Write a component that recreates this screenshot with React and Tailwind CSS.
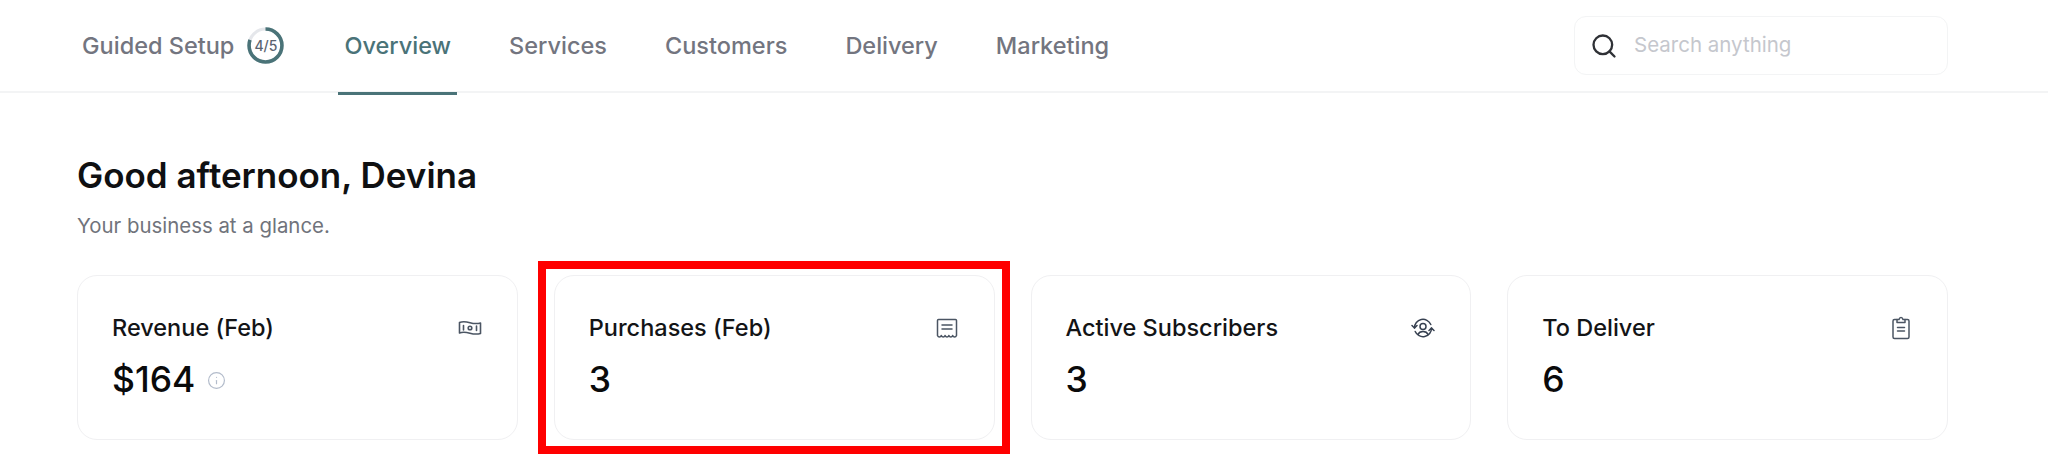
import React from "react";
import { Search, Info } from "lucide-react";

const BanknoteIcon = () => (
  <svg width="24" height="24" viewBox="0 0 24 24" fill="none" stroke="#4b5563" strokeWidth="1.6" strokeLinecap="round" strokeLinejoin="round">
    <path d="M1.500 6.500c3.500-1.400 6.500-.9 10.500.2s6.800 1.300 10.500.3v10.500c-3.700 1-6.500.8-10.500-.3s-7-1.600-10.500-.2z" />
    <circle cx="12" cy="12" r="1.800" />
    <path d="M5.500 9.500v4.500M18.500 10v4.500" />
  </svg>
);

const ReceiptIcon = () => (
  <svg width="24" height="24" viewBox="0 0 24 24" fill="none" stroke="#4b5563" strokeWidth="1.500" strokeLinecap="round" strokeLinejoin="round">
    <path d="M2.500 19.500V4.500a1 1 0 0 1 1-1h17a1 1 0 0 1 1 1v15c-.8 2-3 2-3.800 0-.8 2-3 2-3.800 0-.8 2-3 2-3.800 0-.8 2-3 2-3.800 0-.8 2-3 2-3.800 0z" />
    <path d="M7 9h10M7 13h10" />
  </svg>
);

const SubscriberIcon = () => (
  <svg width="24" height="24" viewBox="0 0 24 24" fill="none" stroke="#374151" strokeWidth="1.500" strokeLinecap="round" strokeLinejoin="round">
    <path d="M3.500 12A8.500 8.500 0 0 1 19.800 8.500" />
    <path d="M20.500 12A8.500 8.500 0 0 1 4.200 15.500" />
    <path d="M1 9.500 3.500 12 6 9.500" />
    <path d="M18 14.500 20.500 12 23 14.500" />
    <circle cx="12" cy="10.500" r="3" />
    <path d="M7 18.500c.8-2 2.700-3 5-3s4.200 1 5 3" />
  </svg>
);

const ClipboardIcon = () => (
  <svg width="24" height="24" viewBox="-1 0 24 24" fill="none" stroke="#4b5563" strokeWidth="1.500" strokeLinecap="round" strokeLinejoin="round">
    <path d="M8 3.500H5.500a1.500 1.500 0 0 0-1.500 1.500v16a1.500 1.500 0 0 0 1.500 1.500h13a1.500 1.500 0 0 0 1.500-1.500V5a1.500 1.500 0 0 0-1.500-1.500H16" />
    <path d="M8 6.500V3.500h2c.3-1.300 1-2 2-2s1.700.7 2 2h2v3z" />
    <path d="M8.500 11.500h7M8.500 15h7" />
  </svg>
);

const Ring = () => (
  <div className="relative w-[37px] h-[37px] ml-[13px]">
    <svg width="37" height="37" viewBox="0 0 36 36" fill="none">
      <circle cx="18" cy="18" r="16" stroke="#e5e7eb" strokeWidth="3" />
      <circle cx="18" cy="18" r="16" stroke="#4a7378" strokeWidth="3.500" strokeDasharray="80.400 100.530" transform="rotate(-90 18 18)" />
    </svg>
    <span className="absolute inset-0 flex items-center justify-center text-[14px] font-medium text-[#5b6470]">4/5</span>
  </div>
);

const Tab = ({ children, active }) => (
  <a className={`relative flex h-full items-center px-[6px] text-[23.500px] font-medium ${active ? "text-[#4a7378]" : "text-[#73757f]"}`}>
    {children}
    {active && <span className="absolute left-0 right-0 bottom-[-4px] h-[3px] bg-[#4a7378]" />}
  </a>
);

const Card = ({ label, value, icon, info, highlight }) => (
  <div className="relative h-[165px] rounded-[20px] border border-[#f0f0f2] bg-white pl-[34px] pr-[35px] pt-[38px]">
    <div className="flex items-center justify-between h-[28px]">
      <span className="text-[23.500px] font-medium text-[#131416]">{label}</span>
      {icon}
    </div>
    <div className="mt-[14px] flex items-center gap-[12px]">
      <span className="text-[35.500px] leading-[48px] font-medium text-[#0a0a0b]">{value}</span>
      {info && <Info size={19} strokeWidth={1.500} className="text-[#b3bccb]" />}
    </div>
    {highlight && (
      <div className="absolute left-[-17px] right-[-16px] top-[-15px] bottom-[-15px] border-[8px] border-[#ff0000]" />
    )}
  </div>
);

export default function App() {
  return (
    <div className="h-[463px] overflow-hidden bg-white font-['Inter',sans-serif]">
      <header className="flex h-[93px] items-center justify-between border-b-2 border-[#f3f4f5] pl-[82px] pr-[100px]">
        <nav className="flex h-full items-center">
          <div className="flex items-center text-[23.500px] font-medium text-[#73757f] mr-[54px]">
            Guided Setup
            <Ring />
          </div>
          <div className="flex h-full items-center gap-[46px]">
            <Tab active>Overview</Tab>
            <Tab>Services</Tab>
            <Tab>Customers</Tab>
            <Tab>Delivery</Tab>
            <Tab>Marketing</Tab>
          </div>
        </nav>
        <div className="flex h-[59px] w-[374px] items-center rounded-[12px] border border-[#f3f4f5] pl-[15px]">
          <Search size={28} strokeWidth={2} className="text-[#2f3136]" />
          <span className="ml-[16px] text-[20.500px] text-[#c5c7cd]">Search anything</span>
        </div>
      </header>
      <main className="pl-[77px] pr-[100px]">
        <h1 className="mt-[59px] text-[35px] leading-[46px] font-semibold text-[#0f1012]">Good afternoon, Devina</h1>
        <p className="mt-[14px] text-[20.400px] leading-[28px] text-[#70737b]">Your business at a glance.</p>
        <div className="mt-[35px] grid grid-cols-4 gap-[36px]">
          <Card label="Revenue (Feb)" value="$164" info icon={<BanknoteIcon />} />
          <Card label="Purchases (Feb)" value="3" icon={<ReceiptIcon />} highlight />
          <Card label="Active Subscribers" value="3" icon={<SubscriberIcon />} />
          <Card label="To Deliver" value="6" icon={<ClipboardIcon />} />
        </div>
      </main>
    </div>
  );
}
